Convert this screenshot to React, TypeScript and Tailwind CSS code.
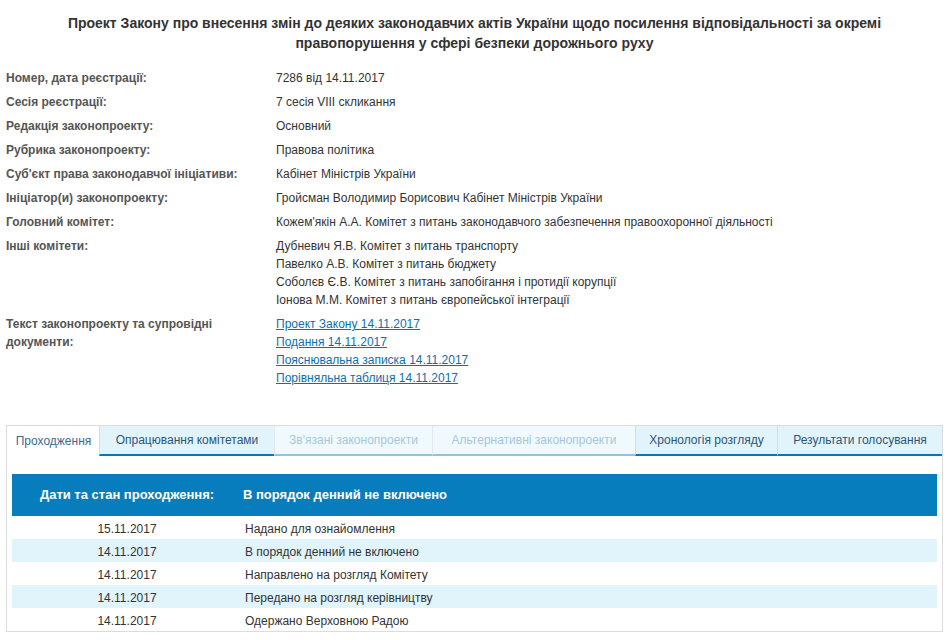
import React from 'react';

const info: { label: string; values: string[]; links?: boolean }[] = [
  { label: 'Номер, дата реєстрації:', values: ['7286 від 14.11.2017'] },
  { label: 'Сесія реєстрації:', values: ['7 сесія VIII скликання'] },
  { label: 'Редакція законопроекту:', values: ['Основний'] },
  { label: 'Рубрика законопроекту:', values: ['Правова політика'] },
  { label: "Суб'єкт права законодавчої ініціативи:", values: ['Кабінет Міністрів України'] },
  { label: 'Ініціатор(и) законопроекту:', values: ['Гройсман Володимир Борисович Кабінет Міністрів України'] },
  { label: 'Головний комітет:', values: ["Кожем'якін А.А. Комітет з питань законодавчого забезпечення правоохоронної діяльності"] },
  {
    label: 'Інші комітети:',
    values: [
      'Дубневич Я.В. Комітет з питань транспорту',
      'Павелко А.В. Комітет з питань бюджету',
      'Соболєв Є.В. Комітет з питань запобігання і протидії корупції',
      'Іонова М.М. Комітет з питань європейської інтеграції',
    ],
  },
  {
    label: 'Текст законопроекту та супровідні документи:',
    values: [
      'Проект Закону 14.11.2017',
      'Подання 14.11.2017',
      'Пояснювальна записка 14.11.2017',
      'Порівняльна таблиця 14.11.2017',
    ],
    links: true,
  },
];

const tabs: { name: string; w: string; state: 'active' | 'on' | 'off' }[] = [
  { name: 'Проходження', w: 'w-[92px]', state: 'active' },
  { name: 'Опрацювання комітетами', w: 'w-[175px]', state: 'on' },
  { name: "Зв'язані законопроекти", w: 'w-[158px]', state: 'off' },
  { name: 'Альтернативні законопроекти', w: 'w-[203px]', state: 'off' },
  { name: 'Хронологія розгляду', w: 'w-[142px]', state: 'on' },
  { name: 'Результати голосування', w: 'flex-1', state: 'on' },
];

const stages = [
  ['15.11.2017', 'Надано для ознайомлення'],
  ['14.11.2017', 'В порядок денний не включено'],
  ['14.11.2017', 'Направлено на розгляд Комітету'],
  ['14.11.2017', 'Передано на розгляд керівництву'],
  ['14.11.2017', 'Одержано Верховною Радою'],
];

export default function App() {
  return (
    <div className="min-h-screen bg-white font-['Liberation_Sans',Arial,sans-serif] text-[12px] text-[#333]">
      <h1 className="px-[60px] pt-[13px] text-center text-[14px] font-bold leading-[20px] text-[#333]">
        Проект Закону про внесення змін до деяких законодавчих актів України щодо посилення відповідальності за окремі
        правопорушення у сфері безпеки дорожнього руху
      </h1>

      <div className="mt-[16px] pl-[6px]">
        {info.map((row) => (
          <div key={row.label} className="grid grid-cols-[270px_1fr] pb-[6px]">
            <div className="pr-[20px] font-bold leading-[18px] text-[#555]">{row.label}</div>
            <div className="leading-[18px]">
              {row.values.map((v) =>
                row.links ? (
                  <div key={v}>
                    <a href="#" className="text-[#0a6fb3] underline">{v}</a>
                  </div>
                ) : (
                  <div key={v}>{v}</div>
                )
              )}
            </div>
          </div>
        ))}
      </div>

      <div className="mx-[6px] mt-[32px] border border-[#dcdcdc]">
        <div className="flex h-[30px] text-[12px]">
          {tabs.map((t) => (
            <div
              key={t.name}
              className={
                t.w +
                ' flex items-center justify-center border-l ' +
                (t.state === 'active'
                  ? 'border-l-transparent bg-white text-[#3b6a95]'
                  : t.state === 'on'
                  ? 'border-l-[#d5dde3] border-b-2 border-b-[#0a76b7] bg-[#e1f4fc] text-[#2e5577]'
                  : 'border-l-[#dfe9ef] border-b-2 border-b-[#94c2dc] bg-[#f0f9fd] text-[#a6c7dd]')
              }
            >
              {t.name}
            </div>
          ))}
        </div>

        <div className="px-[5px] pt-[18px]">
          <div className="flex h-[42px] items-center bg-[#087dbd] text-[13px] font-bold text-white">
            <div className="w-[230px] text-center">Дати та стан проходження:</div>
            <div className="pl-[1px]">В порядок денний не включено</div>
          </div>
          {stages.map(([d, s], i) => (
            <div
              key={i}
              className={'flex h-[23px] items-center pt-[3px] ' + (i % 2 === 1 ? 'bg-[#e1f4fc]' : 'bg-white')}
            >
              <div className="w-[230px] text-center">{d}</div>
              <div className="pl-[3px]">{s}</div>
            </div>
          ))}
        </div>
      </div>
    </div>
  );
}
